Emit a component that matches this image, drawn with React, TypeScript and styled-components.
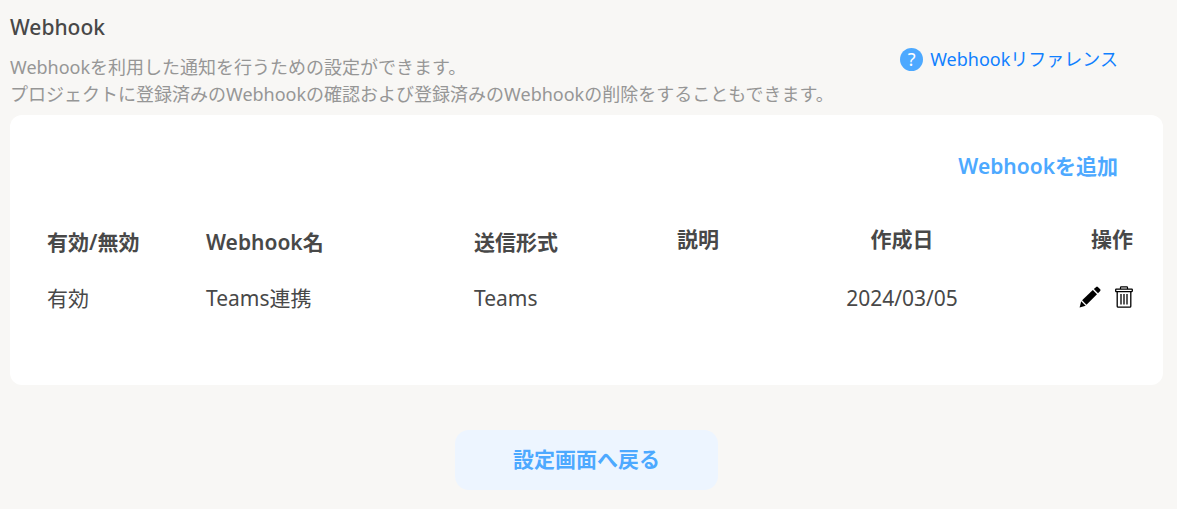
import React from 'react';
import styled, { createGlobalStyle } from 'styled-components';

const GlobalStyle = createGlobalStyle`
  *, *::before, *::after { box-sizing: border-box; }
  body {
    margin: 0;
    background: #f8f7f5;
    color: #484848;
    font-family: 'Noto Sans', 'Noto Sans CJK JP', sans-serif;
    font-size: 21px;
    line-height: 30px;
  }
`;

const Page = styled.main`
  padding: 12px 14px 20px 10px;
`;

const Header = styled.header`
  display: flex;
  justify-content: space-between;
  align-items: center;
  margin-bottom: 7px;
`;

const Title = styled.h1`
  margin: 0 0 12px;
  font-size: 21px;
  font-weight: 500;
`;

const Description = styled.p`
  margin: 0;
  color: #969696;
  font-size: 18px;
  font-weight: 400;
  line-height: 27px;
`;

const ReferenceLink = styled.a`
  display: flex;
  align-items: center;
  gap: 7px;
  margin: 0 45px 2px 0;
  color: #1080ff;
  font-size: 18px;
  font-weight: 400;
  line-height: 27px;
  text-decoration: none;
  white-space: nowrap;
`;

const HelpBadge = styled.span`
  display: grid;
  place-items: center;
  width: 23px;
  height: 23px;
  border-radius: 50%;
  background: #4da9ff;
  color: #fff;
  font-size: 18px;
  font-weight: 400;
  line-height: 23px;
`;

const Card = styled.section`
  padding: 36px 30px 71px 37px;
  border-radius: 12px;
  background: #fff;
`;

const CardActions = styled.div`
  display: flex;
  justify-content: flex-end;
  margin-bottom: 43px;
  padding-right: 15px;
`;

const TextButton = styled.button`
  padding: 0;
  border: 0;
  background: none;
  color: #4da9ff;
  font: inherit;
  font-weight: 600;
  cursor: pointer;
`;

const Table = styled.table`
  width: 100%;
  table-layout: fixed;
  border-collapse: collapse;
`;

const Column = styled.col<{ $width?: number }>`
  width: ${({ $width }) => ($width ? `${$width}px` : 'auto')};
`;

type Align = 'left' | 'center' | 'right';

const HeadCell = styled.th<{ $align?: Align; $raised?: boolean }>`
  height: 40px;
  padding: ${({ $raised }) => ($raised ? '0 0 10px' : '3px 0 7px')};
  font-weight: 600;
  text-align: ${({ $align = 'left' }) => $align};
  white-space: nowrap;
`;

const Cell = styled.td<{ $align?: Align }>`
  padding: 19px 0 1px;
  font-weight: 400;
  text-align: ${({ $align = 'left' }) => $align};
  white-space: nowrap;
`;

const RowActions = styled.div`
  display: flex;
  justify-content: flex-end;
  align-items: flex-start;
  gap: 14px;
  height: 30px;
  padding-top: 3px;
`;

const IconButton = styled.button`
  display: flex;
  padding: 0;
  border: 0;
  background: none;
  color: #000;
  cursor: pointer;
`;

const Footer = styled.footer`
  display: flex;
  justify-content: center;
  margin-top: 45px;
`;

const BackButton = styled.button`
  min-width: 263px;
  height: 60px;
  padding: 0 24px 2px;
  border: 0;
  border-radius: 14px;
  background: #edf5ff;
  color: #4da9ff;
  font: inherit;
  font-weight: 600;
  cursor: pointer;
`;

const PencilIcon = () => (
  <svg width="22" height="22" viewBox="0 0 22 22" fill="currentColor" aria-hidden="true">
    <path d="M0.6 21.4 2.2 15.3 6.7 19.8Z" />
    <path d="M3.1 14.2 13.8 4.1 18 8.3 7.5 18.8Z" />
    <path d="M14.8 3.1 17.2 0.9Q18 0.2 18.8 0.9L21.2 3.3Q21.9 4.1 21.2 4.9L19 7.2Z" />
  </svg>
);

const TrashIcon = () => (
  <svg width="18" height="22" viewBox="0 0 18 22" fill="none" stroke="currentColor" aria-hidden="true">
    <path d="M5.5 3V1.5Q5.5 0.8 6.2 0.8H11.8Q12.5 0.8 12.5 1.5V3" strokeWidth="1.2" />
    <rect x="0.7" y="3.2" width="16.6" height="2.4" rx="0.5" strokeWidth="1.3" />
    <path d="M2.2 6V20.2Q2.2 21.2 3.2 21.2H14.8Q15.8 21.2 15.8 20.2V6" strokeWidth="1.3" />
    <path d="M6 8V18.5M9 8V18.5M12 8V18.5" strokeWidth="1.3" />
  </svg>
);

interface Webhook {
  status: string;
  name: string;
  format: string;
  description: string;
  createdAt: string;
}

const webhooks: Webhook[] = [
  { status: '有効', name: 'Teams連携', format: 'Teams', description: '', createdAt: '2024/03/05' },
];

export default function App() {
  return (
    <>
      <GlobalStyle />
      <Page lang="ja">
        <Header>
          <div>
            <Title>Webhook</Title>
            <Description>
              Webhookを利用した通知を行うための設定ができます。
              <br />
              プロジェクトに登録済みのWebhookの確認および登録済みのWebhookの削除をすることもできます。
            </Description>
          </div>
          <ReferenceLink href="#reference">
            <HelpBadge aria-hidden="true">?</HelpBadge>
            Webhookリファレンス
          </ReferenceLink>
        </Header>
        <Card>
          <CardActions>
            <TextButton type="button">Webhookを追加</TextButton>
          </CardActions>
          <Table>
            <colgroup>
              <Column $width={159} />
              <Column $width={268} />
              <Column $width={203} />
              <Column />
              <Column $width={188} />
              <Column $width={137} />
            </colgroup>
            <thead>
              <tr>
                <HeadCell scope="col">有効/無効</HeadCell>
                <HeadCell scope="col">Webhook名</HeadCell>
                <HeadCell scope="col">送信形式</HeadCell>
                <HeadCell scope="col" $raised>説明</HeadCell>
                <HeadCell scope="col" $raised $align="center">作成日</HeadCell>
                <HeadCell scope="col" $raised $align="right">操作</HeadCell>
              </tr>
            </thead>
            <tbody>
              {webhooks.map((hook) => (
                <tr key={hook.name}>
                  <Cell>{hook.status}</Cell>
                  <Cell>{hook.name}</Cell>
                  <Cell>{hook.format}</Cell>
                  <Cell>{hook.description}</Cell>
                  <Cell $align="center">{hook.createdAt}</Cell>
                  <Cell>
                    <RowActions>
                      <IconButton type="button" aria-label="編集"><PencilIcon /></IconButton>
                      <IconButton type="button" aria-label="削除"><TrashIcon /></IconButton>
                    </RowActions>
                  </Cell>
                </tr>
              ))}
            </tbody>
          </Table>
        </Card>
        <Footer>
          <BackButton type="button">設定画面へ戻る</BackButton>
        </Footer>
      </Page>
    </>
  );
}
